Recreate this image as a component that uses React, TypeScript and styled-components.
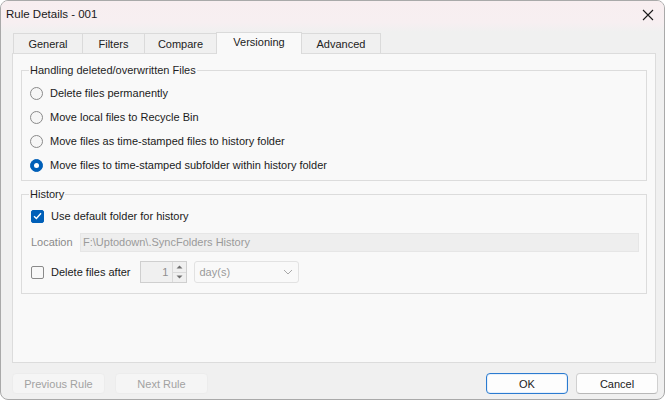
import React, { useState } from 'react';
import styled, { createGlobalStyle, css } from 'styled-components';

const GlobalStyle = createGlobalStyle`
  html, body {
    margin: 0;
    padding: 0;
    background: #ffffff;
  }
  body {
    font-family: "Liberation Sans", Arial, sans-serif;
    font-size: 11px;
    color: #1b1b1b;
  }
`;

const Window = styled.div`
  width: 665px;
  height: 400px;
  box-sizing: border-box;
  border: 1px solid #a9a9a9;
  border-radius: 8px;
  overflow: hidden;
  background: #f0f0f0;
  display: flex;
  flex-direction: column;
`;

const TitleBar = styled.div`
  height: 31px;
  flex-shrink: 0;
  box-sizing: border-box;
  padding: 5px 10px 0 5px;
  display: flex;
  justify-content: space-between;
  align-items: flex-start;
  background: linear-gradient(#f8eef0 0%, #f7eff1 70%, #f0f0f0 100%);
`;

const Title = styled.span`
  font-size: 11.5px;
  line-height: 16px;
  color: #1a1a1a;
`;

const CloseButton = styled.button`
  border: 0;
  background: transparent;
  padding: 0;
  margin-top: 3px;
  width: 12px;
  height: 12px;
  display: flex;
`;

const Body = styled.div`
  flex: 1;
  padding: 0 8px 0 11px;
  display: flex;
  flex-direction: column;
`;

const TabBar = styled.div`
  height: 21px;
  padding-left: 1px;
  display: flex;
  align-items: flex-end;
`;

const Tab = styled.div<{ $active?: boolean; $width: number }>`
  width: ${p => p.$width}px;
  height: 20px;
  box-sizing: border-box;
  border: 1px solid #dadada;
  border-bottom: 0;
  margin-right: -1px;
  background: #f0f0f0;
  display: flex;
  align-items: center;
  justify-content: center;
  line-height: 14px;
  color: #222;
  padding-top: 1px;
  ${p => p.$active && css`
    height: 22px;
    margin-bottom: -1px;
    background: #f9f9f9;
    position: relative;
    z-index: 1;
    padding-top: 0;
    padding-bottom: 3px;
  `}
`;

const Panel = styled.div`
  height: 310px;
  box-sizing: border-box;
  border: 1px solid #dcdcdc;
  background: #f9f9f9;
  padding: 9px 8px 0 8px;
`;

const Group = styled.fieldset<{ $gapTop?: number }>`
  margin: ${p => p.$gapTop || 0}px 0 0 0;
  padding: 0 8px;
  border: 1px solid #dcdcdc;
  min-width: 0;
`;

const Legend = styled.legend`
  padding: 0 1px;
  margin-left: -1px;
  line-height: 14px;
  color: #1f1f1f;
`;

const Options = styled.div`
  padding: 4px 0 3px;
  display: flex;
  flex-direction: column;
`;

const Row = styled.label<{ $h?: number; $mt?: number }>`
  height: ${p => p.$h || 24}px;
  margin-top: ${p => p.$mt || 0}px;
  display: flex;
  align-items: center;
  gap: 7px;
  cursor: default;
`;

const Radio = styled.span<{ $checked?: boolean }>`
  width: 13px;
  height: 13px;
  box-sizing: border-box;
  border-radius: 50%;
  flex-shrink: 0;
  border: 1px solid #8a8a8a;
  background: #f6f6f6;
  display: flex;
  align-items: center;
  justify-content: center;
  ${p => p.$checked && css`
    border-color: #005fb8;
    background: #005fb8;
    &::after {
      content: '';
      width: 5px;
      height: 5px;
      border-radius: 50%;
      background: #ffffff;
    }
  `}
`;

const Check = styled.span<{ $checked?: boolean }>`
  width: 13px;
  height: 13px;
  box-sizing: border-box;
  border-radius: 2px;
  flex-shrink: 0;
  margin-left: 1px;
  border: 1px solid #8a8a8a;
  background: #f8f8f8;
  display: flex;
  align-items: center;
  justify-content: center;
  ${p => p.$checked && css`
    border-color: #005fb8;
    background: #005fb8;
  `}
`;

const HistoryBody = styled.div`
  padding: 3px 0 9px;
  display: flex;
  flex-direction: column;
`;

const FieldLabel = styled.span`
  color: #8a8a8a;
  width: 42px;
  margin-left: 1px;
`;

const PathInput = styled.input`
  flex: 1;
  height: 19px;
  box-sizing: border-box;
  margin-right: -1px;
  border: 1px solid #e6e6e6;
  background: #eeeeee;
  font: inherit;
  color: #9a9a9a;
  padding: 0 2px;
  outline: none;
`;

const Spinner = styled.div`
  width: 47px;
  height: 22px;
  box-sizing: border-box;
  margin-left: 3px;
  border: 1px solid #cfcfcf;
  background: #f0f0f0;
  display: flex;
  color: #8e8e8e;
`;

const SpinValue = styled.span`
  flex: 1;
  text-align: right;
  padding-right: 4px;
  line-height: 20px;
`;

const SpinArrows = styled.div`
  width: 13px;
  display: flex;
  flex-direction: column;
  border-left: 1px solid #dadada;
`;

const SpinArrow = styled.div<{ $down?: boolean }>`
  flex: 1;
  display: flex;
  align-items: center;
  justify-content: center;
  ${p => p.$down && css`border-top: 1px solid #dadada;`}
`;

const Select = styled.div`
  width: 105px;
  height: 22px;
  box-sizing: border-box;
  border: 1px solid #e2e2e2;
  border-radius: 3px;
  background: #f9f9f9;
  display: flex;
  align-items: center;
  justify-content: space-between;
  padding: 0 5px 0 4px;
  color: #9a9a9a;
`;

const Footer = styled.div`
  margin-top: 10px;
  padding-right: 0;
  margin-right: -2px;
  display: flex;
  align-items: center;
`;

const Button = styled.button<{ $width: number; $primary?: boolean; $disabled?: boolean }>`
  width: ${p => p.$width}px;
  height: 21px;
  box-sizing: border-box;
  border-radius: 4px;
  border: 1px solid #d0d0d0;
  border-bottom-color: #b8b8b8;
  background: #fdfdfd;
  font: inherit;
  color: #1b1b1b;
  padding: 0;
  ${p => p.$primary && css`
    border: 1px solid #2b7bd0;
    box-shadow: inset 0 0 0 1px #e6f0fb;
  `}
  ${p => p.$disabled && css`
    background: #f5f5f5;
    border-color: #ececec;
    color: #a2a2a2;
  `}
`;

const Spacer = styled.div`
  flex: 1;
`;

const tabs = [
  { label: 'General', width: 70 },
  { label: 'Filters', width: 63 },
  { label: 'Compare', width: 73 },
  { label: 'Versioning', width: 86 },
  { label: 'Advanced', width: 80 },
];

const options = [
  'Delete files permanently',
  'Move local files to Recycle Bin',
  'Move files as time-stamped files to history folder',
  'Move files to time-stamped subfolder within history folder',
];

const App = () => {
  const [choice, setChoice] = useState(3);
  const [useDefault, setUseDefault] = useState(true);
  const [deleteAfter, setDeleteAfter] = useState(false);

  return (
    <Window>
      <GlobalStyle />
      <TitleBar>
        <Title>Rule Details - 001</Title>
        <CloseButton aria-label="Close">
          <svg width="12" height="12" viewBox="0 0 12 12">
            <path d="M1 1L11 11M11 1L1 11" stroke="#1a1a1a" strokeWidth="1.1" />
          </svg>
        </CloseButton>
      </TitleBar>
      <Body>
        <TabBar>
          {tabs.map(t => (
            <Tab key={t.label} $width={t.width} $active={t.label === 'Versioning'}>
              {t.label}
            </Tab>
          ))}
        </TabBar>
        <Panel>
          <Group>
            <Legend>Handling deleted/overwritten Files</Legend>
            <Options>
              {options.map((o, i) => (
                <Row key={o} onClick={() => setChoice(i)}>
                  <Radio $checked={choice === i} />
                  {o}
                </Row>
              ))}
            </Options>
          </Group>
          <Group $gapTop={6}>
            <Legend>History</Legend>
            <HistoryBody>
              <Row onClick={() => setUseDefault(!useDefault)}>
                <Check $checked={useDefault}>
                  {useDefault && (
                    <svg width="9" height="8" viewBox="0 0 9 8">
                      <path d="M1 4.2L3.4 6.5L8 1.3" fill="none" stroke="#fff" strokeWidth="1.4" />
                    </svg>
                  )}
                </Check>
                Use default folder for history
              </Row>
              <Row as="div" $mt={2} $h={24}>
                <FieldLabel>Location</FieldLabel>
                <PathInput readOnly value="F:\Uptodown\.SyncFolders History" />
              </Row>
              <Row as="div" $mt={6} $h={24}>
                <Check $checked={deleteAfter} onClick={() => setDeleteAfter(!deleteAfter)} />
                <span>Delete files after</span>
                <Spinner>
                  <SpinValue>1</SpinValue>
                  <SpinArrows>
                    <SpinArrow>
                      <svg width="7" height="4" viewBox="0 0 7 4"><path d="M0.5 3.5L3.5 0.5L6.5 3.5Z" fill="#6f6f6f" /></svg>
                    </SpinArrow>
                    <SpinArrow $down>
                      <svg width="7" height="4" viewBox="0 0 7 4"><path d="M0.5 0.5L3.5 3.5L6.5 0.5Z" fill="#6f6f6f" /></svg>
                    </SpinArrow>
                  </SpinArrows>
                </Spinner>
                <Select>
                  <span>day(s)</span>
                  <svg width="10" height="6" viewBox="0 0 10 6">
                    <path d="M1 1L5 5L9 1" fill="none" stroke="#a8a8a8" strokeWidth="1" />
                  </svg>
                </Select>
              </Row>
            </HistoryBody>
          </Group>
        </Panel>
        <Footer>
          <Button $width={93} $disabled>Previous Rule</Button>
          <Button $width={93} $disabled style={{ marginLeft: 10 }}>Next Rule</Button>
          <Spacer />
          <Button $width={82} $primary>OK</Button>
          <Button $width={82} style={{ marginLeft: 8 }}>Cancel</Button>
        </Footer>
      </Body>
    </Window>
  );
};

export default App;
